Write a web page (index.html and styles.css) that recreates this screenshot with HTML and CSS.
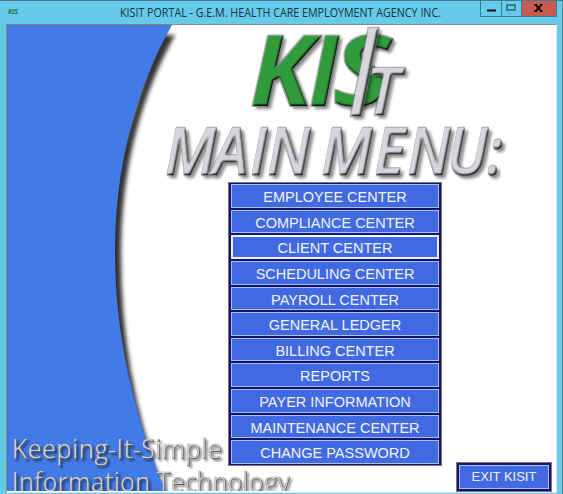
FILE: index.html
```html
<!DOCTYPE html>
<html lang="en">
<head>
<meta charset="utf-8">
<title>KISIT Portal</title>
<link rel="stylesheet" href="styles.css">
</head>
<body>
<div class="window">
  <header class="titlebar">
    <svg class="app-icon" width="14" height="12" viewBox="0 0 14 12"><text x="1" y="8" textLength="10" lengthAdjust="spacingAndGlyphs">KIS</text></svg>
    <svg class="title" width="360" height="22"><text x="0" y="16" textLength="321" lengthAdjust="spacingAndGlyphs">KISIT PORTAL - G.E.M. HEALTH CARE EMPLOYMENT AGENCY INC.</text></svg>
    <div class="controls">
      <span class="ctl min"><svg width="20" height="15"><path d="M6 9.500h9" stroke="#111" stroke-width="2"/></svg></span>
      <span class="ctl max"><svg width="19" height="15"><rect x="5" y="4" width="8" height="5" fill="none" stroke="#326c7d" stroke-width="1.6"/></svg></span>
      <span class="ctl close"><svg width="34" height="15"><path d="M13.500 3.500l6 7M19.500 3.500l-6 7" stroke="#1b0b0b" stroke-width="2"/><path d="M12 3.500h3M18 3.500h3M12 10.500h3M18 10.500h3" stroke="#1b0b0b" stroke-width="1"/></svg></span>
    </div>
  </header>
  <main class="client">
    <svg class="scene" width="549" height="466" viewBox="7 25 549 466">
      <defs>
        <filter id="soft" x="-20%" y="-5%" width="140%" height="110%"><feGaussianBlur stdDeviation="2"/></filter>
        <filter id="bevel" x="-10%" y="-20%" width="120%" height="150%" color-interpolation-filters="sRGB">
          <feGaussianBlur in="SourceAlpha" stdDeviation="1.1" result="b"/>
          <feDiffuseLighting in="b" surfaceScale="2.2" diffuseConstant="1.22" lighting-color="#fff" result="l"><feDistantLight azimuth="235" elevation="55"/></feDiffuseLighting>
          <feComposite in="l" in2="SourceGraphic" operator="arithmetic" k1="1" result="m"/>
          <feComposite in="m" in2="SourceAlpha" operator="in" result="t"/>
          <feMorphology in="SourceAlpha" operator="dilate" radius=".5" result="d"/>
          <feFlood flood-color="#777" flood-opacity=".6"/>
          <feComposite in2="d" operator="in" result="edge"/>
          <feGaussianBlur in="SourceAlpha" stdDeviation="1.8"/>
          <feOffset dx="3" dy="3"/>
          <feComponentTransfer result="s"><feFuncA type="linear" slope=".45"/></feComponentTransfer>
          <feMerge><feMergeNode in="s"/><feMergeNode in="edge"/><feMergeNode in="t"/></feMerge>
        </filter>
        <filter id="smallbevel" x="-5%" y="-20%" width="110%" height="150%" color-interpolation-filters="sRGB">
          <feGaussianBlur in="SourceAlpha" stdDeviation=".7" result="b"/>
          <feDiffuseLighting in="b" surfaceScale=".9" diffuseConstant="1.2" lighting-color="#fff" result="l"><feDistantLight azimuth="235" elevation="58"/></feDiffuseLighting>
          <feComposite in="l" in2="SourceGraphic" operator="arithmetic" k1="1" result="m"/>
          <feComposite in="m" in2="SourceAlpha" operator="in" result="t"/>
          <feMorphology in="SourceAlpha" operator="dilate" radius=".4" result="d"/>
          <feFlood flood-color="#666" flood-opacity=".6"/>
          <feComposite in2="d" operator="in" result="edge"/>
          <feGaussianBlur in="SourceAlpha" stdDeviation="1.2"/>
          <feOffset dx="2" dy="2"/>
          <feComponentTransfer result="s"><feFuncA type="linear" slope=".45"/></feComponentTransfer>
          <feMerge><feMergeNode in="s"/><feMergeNode in="edge"/><feMergeNode in="t"/></feMerge>
        </filter>
      </defs>
      <path class="arc-shadow" filter="url(#soft)" d="M158 35H175Q122 130 121 250Q120 370 160 480L167 495H140L90 250Z"/>
      <path class="arc" d="M7 25H172C138 85 115 162 115 252C115 335 133 412 166 492H7Z"/>
      <g filter="url(#bevel)" class="logo-green">
        <text x="250" y="106" textLength="63" lengthAdjust="spacingAndGlyphs">K</text>
        <text x="309" y="106" textLength="30" lengthAdjust="spacingAndGlyphs">I</text>
        <text x="333" y="106" textLength="59" lengthAdjust="spacingAndGlyphs">S</text>
      </g>
      <g filter="url(#bevel)" class="logo-grey">
        <text class="logo-i" x="346" y="116" textLength="32" lengthAdjust="spacingAndGlyphs">I</text>
        <text class="logo-t" x="366" y="115" textLength="34" lengthAdjust="spacingAndGlyphs">T</text>
      </g>
      <text class="heading" filter="url(#bevel)" transform="scale(.93 1)" x="177.4 229 268.8 287.1 335.5 345.200 402.200 437.600 480.600 523.700" y="175">MAIN MENU:</text>
      <text class="slogan" filter="url(#smallbevel)" x="12" y="459" textLength="210" lengthAdjust="spacingAndGlyphs">Keeping-It-Simple</text>
      <text class="slogan" filter="url(#smallbevel)" x="12" y="492" textLength="278" lengthAdjust="spacingAndGlyphs">Information Technology</text>
    </svg>
    <nav class="menu">
      <button>EMPLOYEE CENTER</button>
      <button>COMPLIANCE CENTER</button>
      <button class="focused">CLIENT CENTER</button>
      <button>SCHEDULING CENTER</button>
      <button>PAYROLL CENTER</button>
      <button>GENERAL LEDGER</button>
      <button>BILLING CENTER</button>
      <button>REPORTS</button>
      <button>PAYER INFORMATION</button>
      <button>MAINTENANCE CENTER</button>
      <button>CHANGE PASSWORD</button>
    </nav>
    <button class="exit">EXIT KISIT</button>
  </main>
</div>
</body>
</html>
```
FILE: styles.css
```css
* { box-sizing: border-box; }
body { margin: 0; overflow: hidden; font-family: "Liberation Sans", Arial, sans-serif; }
.window { width: 563px; height: 494px; background: #66cbea; border-top: 1px solid #48788b; border-right: 1px solid #55889a; padding: 0 5px 1px 6px; display: flex; flex-direction: column; }
.titlebar { height: 23px; flex: none; display: flex; align-items: flex-start; }
.app-icon { margin: 5px 99px 0 1px; flex: none; font: italic bold 7px "Open Sans", sans-serif; fill: #23733a; }
.title { flex: none; font: 12px "Open Sans", "Noto Sans", sans-serif; fill: #12303a; }
.controls { flex: none; display: flex; height: 16px; border: 1px solid #397c90; border-top: 0; }
.ctl { height: 15px; border-right: 1px solid #397c90; }
.ctl:last-child { border-right: 0; }
.ctl svg { display: block; }
.close { background: #c75b50; }
.client { position: relative; flex: 1; border: 1px solid #858585; border-right-color: #e9e5e3; border-bottom: 1px solid #e5e5e5; background: #fff; overflow: hidden; }
.scene { position: absolute; left: 0; top: 0; }
.arc { fill: #427be7; }
.arc-shadow { fill: #333; }
.logo-green { fill: #319b3c; font: italic bold 99px "Open Sans", sans-serif; }
.logo-grey { fill: #d6d6dc; stroke: #d6d6dc; stroke-width: .6; font-family: "Open Sans", sans-serif; font-style: italic; font-weight: 600; }
.logo-i { font-size: 122px; font-weight: 400; }
.logo-t { font-size: 66px; }
.heading { fill: #d6d6dc; stroke: #d6d6dc; stroke-width: .6; font: italic 600 65px "Open Sans", sans-serif; }
.slogan { fill: #ccced4; stroke: #ccced4; stroke-width: .5; font: 500 27px "Open Sans", sans-serif; }
.menu { position: relative; width: 214px; height: 284px; margin: 157px 0 0 221px; padding: 1px 2px 1px 2px; border: 1px solid #77777d; background: #15156a; display: grid; grid-template-rows: repeat(11, 1fr); gap: 2px; }
button { display: block; width: 100%; min-height: 0; margin: 0; padding: 2px 0 0; border: 1px solid #aabff5; border-radius: 0; background: #4169e1; color: #f2f5ff; font: 14.5px/20px "Liberation Sans", Arial, sans-serif; text-align: center; }
button.focused { border: 2px solid #eef2ff; padding-top: 1px; }
button.exit { position: absolute; right: 4px; bottom: 0; width: 96px; height: 30px; padding: 0; border: 1px solid #77777d; font-size: 13px; box-shadow: inset 0 0 0 2px #15156a, inset 0 0 0 3px #aabff5; }
```
